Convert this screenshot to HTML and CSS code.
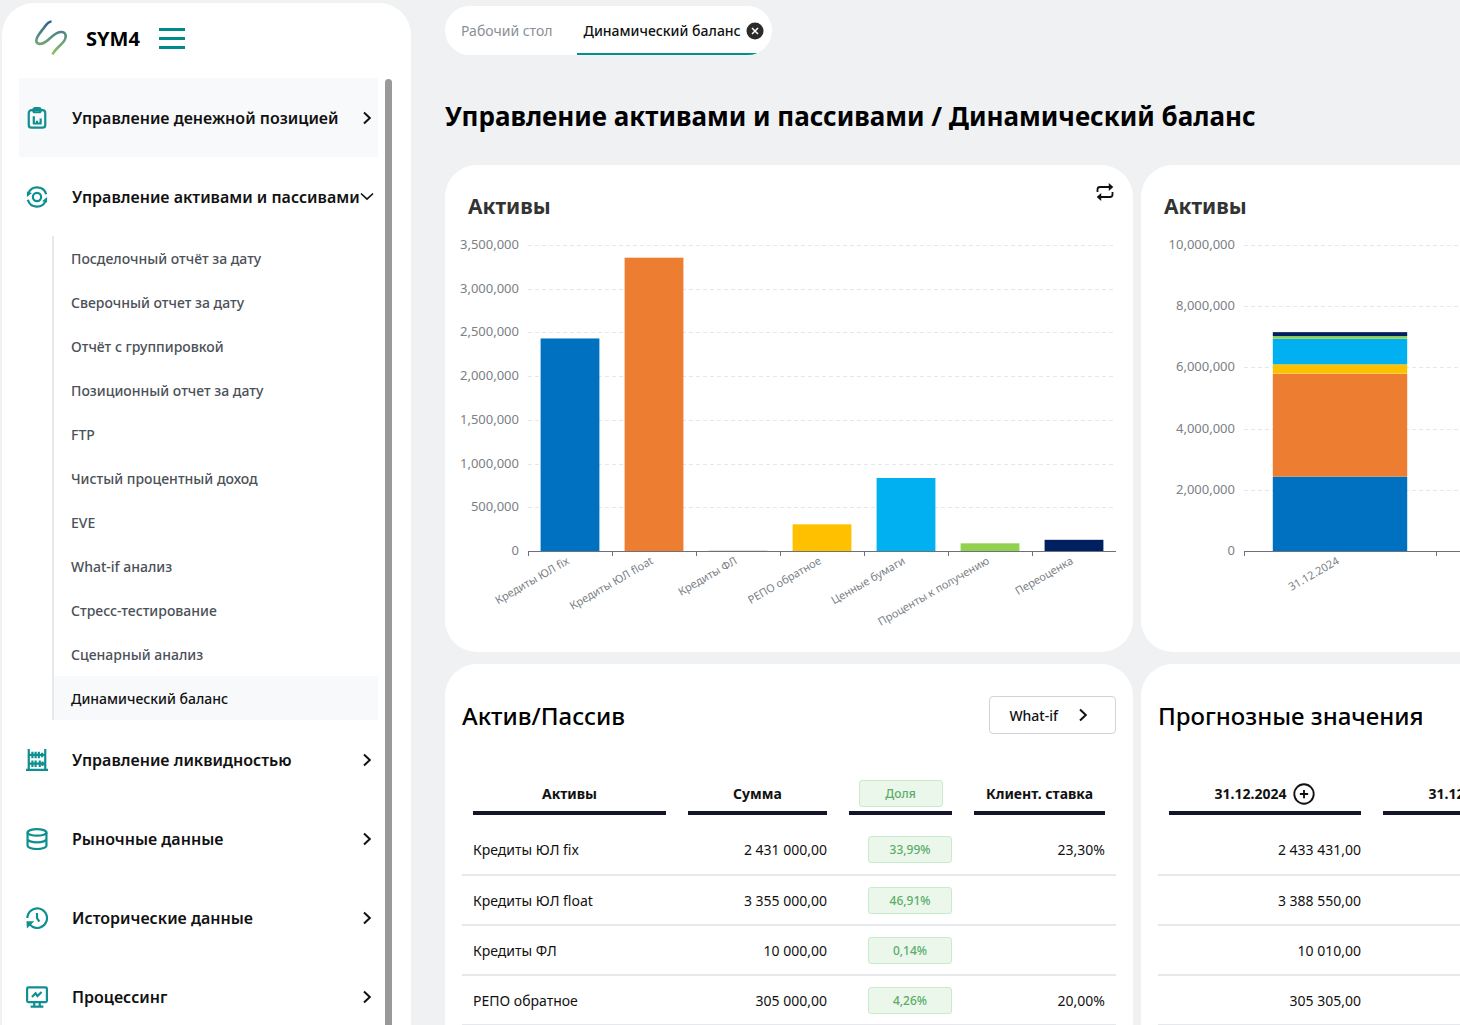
FILE: index.html
```html
<!DOCTYPE html>
<html lang="ru">
<head>
    <meta charset="UTF-8">
    <meta name="viewport" content="width=device-width, initial-scale=1.0">
    <title>SYM4 - Динамический баланс</title>
    <link rel="stylesheet" href="styles.css">
</head>
<body>
    <!-- shared chevrons -->
    <svg class="sprite" aria-hidden="true">
        <symbol id="chevron-right" viewBox="0 0 16 16">
            <path d="M5 2.5 10.8 8 5 13.5" fill="none" stroke="currentColor" stroke-width="2"/>
        </symbol>
        <symbol id="chevron-down" viewBox="0 0 16 16">
            <path d="M2 4.5 8 10.2 14 4.5" fill="none" stroke="currentColor" stroke-width="1.6"/>
        </symbol>
        <symbol id="plus-circle" viewBox="0 0 24 24">
            <circle cx="12" cy="12" r="10.6" fill="none" stroke="currentColor" stroke-width="2"/>
            <path d="M12 7.5v9M7.5 12h9" fill="none" stroke="currentColor" stroke-width="2"/>
        </symbol>
    </svg>

    <div class="app">
        <aside class="sidebar">
            <div class="brand">
                <svg class="logo" viewBox="0 0 34 36" fill="none">
                    <defs>
                        <linearGradient id="logoFill" x1="0" y1="0" x2="0" y2="1">
                            <stop offset="0" stop-color="#2f5f8f"/>
                            <stop offset="0.5" stop-color="#5f9480"/>
                            <stop offset="1" stop-color="#8cc657"/>
                        </linearGradient>
                    </defs>
                    <path d="M17.5 1.5C14 1.5 12 5 9 9C5 14 2.3 17 2.3 20.5C2.3 24 6 25 10.5 22.5C16 19.5 20 12.5 26.5 12C31 11.7 32.5 14.5 31.3 18.5C29.5 24.5 22 27 18.5 34.5" stroke="url(#logoFill)" stroke-width="2.6"/>
                </svg>
                <span class="brand-name">SYM4</span>
                <button class="burger" type="button" aria-label="Меню"><span></span><span></span><span></span></button>
            </div>

            <div class="sidebar-body">
                <nav class="menu">
                    <a class="menu-item hovered" href="#">
                        <svg class="menu-icon" viewBox="0 0 24 24">
                            <rect x="3" y="3.5" width="18" height="19" rx="3"/>
                            <rect x="8" y="1.2" width="8" height="4.5" rx="2"/>
                            <path d="M8.500 10v8M12 15v3M16 12.500v5.500M7.500 18h9.500"/>
                        </svg>
                        <span class="menu-text">Управление денежной позицией</span>
                        <svg class="chevron"><use href="#chevron-right"/></svg>
                    </a>
                    <a class="menu-item" href="#">
                        <svg class="menu-icon" viewBox="0 0 24 24">
                            <circle cx="12" cy="12" r="4.5"/>
                            <path d="M2.5 8A10.3 10.3 0 0 1 22 9M21.5 16A10.3 10.3 0 0 1 2 15"/>
                            <path class="solid" d="M1 6v6l5.500-4.500zM23 18v-6l-5.500 4.500z"/>
                        </svg>
                        <span class="menu-text">Управление активами и пассивами</span>
                        <svg class="chevron"><use href="#chevron-down"/></svg>
                    </a>
                    <div class="submenu">
                        <a href="#">Посделочный отчёт за дату</a>
                        <a href="#">Сверочный отчет за дату</a>
                        <a href="#">Отчёт с группировкой</a>
                        <a href="#">Позиционный отчет за дату</a>
                        <a href="#">FTP</a>
                        <a href="#">Чистый процентный доход</a>
                        <a href="#">EVE</a>
                        <a href="#">What-if анализ</a>
                        <a href="#">Стресс-тестирование</a>
                        <a href="#">Сценарный анализ</a>
                        <a class="active" href="#">Динамический баланс</a>
                    </div>
                    <a class="menu-item" href="#">
                        <svg class="menu-icon" viewBox="0 0 24 24">
                            <path d="M3 0v22M21 0v22M0 22.8h24M3 6.5h18M3 16h18"/>
                            <path d="M7 3v7M10.5 3v7M14 3v7M17.5 4v5M7 12.5v7M10.5 12.5v7M15 12.500v7M18 13.500v5"/>
                        </svg>
                        <span class="menu-text">Управление ликвидностью</span>
                        <svg class="chevron"><use href="#chevron-right"/></svg>
                    </a>
                    <a class="menu-item" href="#">
                        <svg class="menu-icon" viewBox="0 0 24 24">
                            <ellipse cx="12" cy="4.8" rx="10.3" ry="3.5"/>
                            <path d="M1.7 4.8v14.4c0 2 4.6 3.8 10.3 3.8s10.3-1.8 10.3-3.8V4.8M1.7 12c0 2 4.6 3.6 10.3 3.6s10.3-1.6 10.3-3.6"/>
                        </svg>
                        <span class="menu-text">Рыночные данные</span>
                        <svg class="chevron"><use href="#chevron-right"/></svg>
                    </a>
                    <a class="menu-item" href="#">
                        <svg class="menu-icon" viewBox="0 0 24 24">
                            <path d="M1.5 12A10.7 10.7 0 1 1 7 21.5L3 18"/>
                            <path d="M12 6.5V12l2.5 4"/>
                            <path class="solid" d="M0.5 15.500h8.500l-8 8z"/>
                        </svg>
                        <span class="menu-text">Исторические данные</span>
                        <svg class="chevron"><use href="#chevron-right"/></svg>
                    </a>
                    <a class="menu-item" href="#">
                        <svg class="menu-icon" viewBox="0 0 24 24">
                            <rect x="1.200" y="1.5" width="21.600" height="16" rx="1.5"/>
                            <path d="M9 17.5v5M15 17.5v5M5 22.500h14"/>
                            <path d="M6.5 12l4-4 2 3 4.5-4.5"/>
                        </svg>
                        <span class="menu-text">Процессинг</span>
                        <svg class="chevron"><use href="#chevron-right"/></svg>
                    </a>
                </nav>
                <div class="scroll-thumb"></div>
            </div>
        </aside>

        <main class="content">
            <div class="tabs">
                <a class="tab" href="#">Рабочий стол</a>
                <div class="tab active">
                    <a href="#">Динамический баланс</a>
                    <button class="tab-close" type="button" aria-label="Закрыть">
                        <svg viewBox="0 0 18 18"><circle cx="9" cy="9" r="8.5" fill="#2b2b2b"/><path d="M6 6l6 6M12 6l-6 6" stroke="#fff" stroke-width="1.5"/></svg>
                    </button>
                </div>
            </div>

            <h1>Управление активами и пассивами / Динамический баланс</h1>

            <div class="cards">
                <section class="card chart-card">
                    <div class="chart-header">
                        <h2>Активы</h2>
                        <button class="icon-button" type="button" aria-label="Переключить">
                            <svg viewBox="0 0 18 18" fill="none" stroke="#111" stroke-width="1.8">
                                <path d="M1.5 9V6.5A2.5 2.5 0 0 1 4 4H14M16.5 9v2.5A2.5 2.5 0 0 1 14 14H4"/>
                                <path d="M12.8 0 17.3 4l-4.5 4zM5.2 10 .7 14l4.5 4z" fill="#111" stroke="none"/>
                            </svg>
                        </button>
                    </div>
                    <svg class="chart" id="assetsChart" viewBox="0 0 688 400"></svg>
                </section>

                <section class="card chart-card">
                    <div class="chart-header">
                        <h2>Активы</h2>
                    </div>
                    <svg class="chart" id="forecastChart" viewBox="0 0 688 400"></svg>
                </section>

                <section class="card table-card">
                    <div class="table-header">
                        <h2>Актив/Пассив</h2>
                        <button class="whatif" type="button">What-if <svg class="chevron"><use href="#chevron-right"/></svg></button>
                    </div>
                    <table>
                        <colgroup>
                            <col class="col-name"><col class="col-sum"><col class="col-share"><col>
                        </colgroup>
                        <thead>
                            <tr>
                                <th><div class="th-inner">Активы</div></th>
                                <th><div class="th-inner">Сумма</div></th>
                                <th><div class="th-inner"><span class="pill">Доля</span></div></th>
                                <th><div class="th-inner">Клиент. ставка</div></th>
                            </tr>
                        </thead>
                        <tbody>
                            <tr><td>Кредиты ЮЛ fix</td><td class="num">2 431 000,00</td><td class="num"><span class="pill">33,99%</span></td><td class="num">23,30%</td></tr>
                            <tr><td>Кредиты ЮЛ float</td><td class="num">3 355 000,00</td><td class="num"><span class="pill">46,91%</span></td><td class="num"></td></tr>
                            <tr><td>Кредиты ФЛ</td><td class="num">10 000,00</td><td class="num"><span class="pill">0,14%</span></td><td class="num"></td></tr>
                            <tr><td>РЕПО обратное</td><td class="num">305 000,00</td><td class="num"><span class="pill">4,26%</span></td><td class="num">20,00%</td></tr>
                        </tbody>
                    </table>
                </section>

                <section class="card table-card">
                    <div class="table-header">
                        <h2>Прогнозные значения</h2>
                    </div>
                    <table>
                        <colgroup>
                            <col class="col-date"><col class="col-date"><col>
                        </colgroup>
                        <thead>
                            <tr>
                                <th><div class="th-inner">31.12.2024 <button class="add" type="button" aria-label="Добавить"><svg><use href="#plus-circle"/></svg></button></div></th>
                                <th><div class="th-inner">31.12.2025 <button class="add" type="button" aria-label="Добавить"><svg><use href="#plus-circle"/></svg></button></div></th>
                                <th></th>
                            </tr>
                        </thead>
                        <tbody>
                            <tr><td class="num">2 433 431,00</td><td></td><td></td></tr>
                            <tr><td class="num">3 388 550,00</td><td></td><td></td></tr>
                            <tr><td class="num">10 010,00</td><td></td><td></td></tr>
                            <tr><td class="num">305 305,00</td><td></td><td></td></tr>
                        </tbody>
                    </table>
                </section>
            </div>
        </main>
    </div>

    <script>
        const assets = [
            { name: "Кредиты ЮЛ fix", value: 2431000, color: "#0070c0" },
            { name: "Кредиты ЮЛ float", value: 3355000, color: "#ed7d31" },
            { name: "Кредиты ФЛ", value: 10000, color: "#d9dfdb" },
            { name: "РЕПО обратное", value: 305000, color: "#ffc000" },
            { name: "Ценные бумаги", value: 835000, color: "#00b0f0" },
            { name: "Проценты к получению", value: 88000, color: "#92d050" },
            { name: "Переоценка", value: 128000, color: "#002060" }
        ];

        const plotTop = 9;
        const plotBottom = 315;

        // Grid lines, y labels, ticks and slanted x labels
        function drawAxes(opts) {
            let out = '';
            for (let v = 0; v <= opts.max; v += opts.step) {
                const y = Math.round(plotBottom - (plotBottom - plotTop) * v / opts.max) + 0.5;
                if (v > 0) {
                    out += `<line class="grid-line" x1="${opts.left}" x2="${opts.right}" y1="${y}" y2="${y}"/>`;
                }
                out += `<text class="y-label" x="${opts.left - 9}" y="${y + 3}">${v.toLocaleString('en-US')}</text>`;
            }
            const band = (opts.right - opts.left) / opts.labels.length;
            opts.labels.forEach((label, i) => {
                const x = opts.left + band * i;
                const cx = x + band / 2;
                out += `<line class="axis-line" x1="${x + 0.5}" x2="${x + 0.5}" y1="${plotBottom}" y2="${plotBottom + 5}"/>`;
                out += `<text class="x-label" x="${cx}" y="${plotBottom + 12}" transform="rotate(-30 ${cx} ${plotBottom + 12})">${label}</text>`;
            });
            return out;
        }

        function axisLine(opts) {
            return `<line class="axis-line" x1="${opts.left}" x2="${opts.right}" y1="${plotBottom + 0.5}" y2="${plotBottom + 0.5}"/>`;
        }

        function drawBars(id, opts) {
            const band = (opts.right - opts.left) / opts.labels.length;
            let out = drawAxes(opts);
            assets.forEach((item, i) => {
                const h = (plotBottom - plotTop) * item.value / opts.max;
                out += `<rect x="${opts.left + band * (i + 0.15)}" y="${plotBottom - h}" width="${band * 0.7}" height="${h}" fill="${item.color}"/>`;
            });
            document.getElementById(id).innerHTML = out + axisLine(opts);
        }

        function drawStack(id, opts) {
            const band = (opts.right - opts.left) / opts.labels.length;
            let out = drawAxes(opts);
            let y = plotBottom;
            assets.forEach(item => {
                const h = (plotBottom - plotTop) * item.value / opts.max;
                y -= h;
                out += `<rect x="${opts.left + band * 0.15}" y="${y}" width="${band * 0.7}" height="${h}" fill="${item.color}"/>`;
            });
            document.getElementById(id).innerHTML = out + axisLine(opts);
        }

        drawBars("assetsChart", { left: 83, right: 671, max: 3500000, step: 500000, labels: assets.map(a => a.name) });
        drawStack("forecastChart", { left: 103, right: 679, max: 10000000, step: 2000000, labels: ["31.12.2024", "", ""] });
    </script>
</body>
</html>
```

FILE: styles.css
```css
* {
    box-sizing: border-box;
}

body {
    margin: 0;
    background-color: #eff1f3;
    color: #111;
    font-family: "Noto Sans", "Open Sans", sans-serif;
    font-size: 14px;
}

a {
    color: inherit;
    text-decoration: none;
}

button {
    font: inherit;
    color: inherit;
    background: none;
    border: none;
    padding: 0;
    cursor: pointer;
}

h1,
h2 {
    margin: 0;
}

.sprite {
    display: none;
}

.app {
    display: flex;
    gap: 34px;
    height: 100vh;
    overflow: hidden;
}

/* Sidebar */
.sidebar {
    flex: 0 0 409px;
    min-width: 0;
    display: flex;
    flex-direction: column;
    margin: 3px 0 0 2px;
    background-color: #fff;
    border-radius: 32px 32px 0 0;
}

.brand {
    flex: none;
    display: flex;
    align-items: center;
    height: 70px;
    padding-left: 32px;
    margin-bottom: 5px;
}

.logo {
    width: 34px;
    height: 36px;
}

.brand-name {
    margin-left: 18px;
    font-size: 20px;
    font-weight: 700;
    color: #000;
}

.burger {
    display: flex;
    flex-direction: column;
    gap: 6px;
    width: 26px;
    margin-left: 19px;
}

.burger span {
    height: 3px;
    background-color: #008b8b;
}

.sidebar-body {
    flex: 1;
    display: flex;
    min-height: 0;
    padding: 0 19px 0 17px;
    overflow: hidden;
}

.menu {
    flex: 1;
    min-width: 0;
    margin-right: 7px;
}

.scroll-thumb {
    flex: none;
    width: 7px;
    margin-top: 1px;
    background-color: #999;
    border-radius: 4px 4px 0 0;
}

.menu-item {
    display: flex;
    align-items: center;
    height: 79px;
    padding: 0 3px 0 7px;
    font-size: 16px;
    font-weight: 600;
    white-space: nowrap;
}

.menu-item.hovered {
    background-color: #f8f9fb;
}

.menu-icon {
    flex: none;
    width: 22px;
    height: 22px;
    fill: none;
    stroke: #0f8f8f;
    stroke-width: 2.4;
}

.menu-icon .solid {
    fill: #0f8f8f;
    stroke: none;
}

.menu-text {
    flex: 1;
    min-width: 0;
    margin-left: 24px;
}

.chevron {
    flex: none;
    width: 16px;
    height: 16px;
}

.submenu {
    margin-left: 33px;
    border-left: 2px solid #e6e8ec;
}

.submenu a {
    display: flex;
    align-items: center;
    height: 44px;
    padding-left: 17px;
    font-weight: 500;
    color: #4b5158;
}

.submenu a.active {
    background-color: #f8f9fb;
    color: #111;
}

/* Content */
.content {
    flex: 1;
    min-width: 0;
    padding-top: 6px;
}

.tabs {
    display: inline-flex;
    height: 49px;
    padding-right: 8px;
    background-color: #fff;
    border-radius: 25px;
    overflow: hidden;
}

.tab {
    display: flex;
    align-items: center;
    padding: 0 24px 0 16px;
    color: #8a8f96;
}

.tab.active {
    gap: 5px;
    padding: 0 0 0 7px;
    color: #111;
    font-weight: 500;
    box-shadow: inset 0 -2px 0 #009090;
}

.tab-close,
.tab-close svg {
    display: block;
    width: 18px;
    height: 18px;
}

h1 {
    margin: 45px 0 33px;
    font-size: 26px;
    line-height: 32px;
    font-weight: 700;
    color: #000;
    white-space: nowrap;
}

.cards {
    display: grid;
    grid-template-columns: repeat(2, minmax(688px, 1fr));
    gap: 12px 8px;
}

.card {
    background-color: #fff;
    border-radius: 32px;
}

.chart-card {
    padding-bottom: 16px;
}

.chart-header {
    display: flex;
    justify-content: space-between;
    align-items: flex-start;
    height: 71px;
    padding: 18px 19px 0 23px;
}

.chart-header h2 {
    margin-top: 9px;
    font-size: 21px;
    line-height: 28px;
    color: #333;
}

.icon-button,
.icon-button svg {
    display: block;
    width: 18px;
    height: 18px;
}

.chart {
    display: block;
    width: 100%;
}

.chart text {
    fill: #7b7f86;
    text-anchor: end;
}

.y-label {
    font-size: 13px;
}

.x-label {
    font-size: 11px;
}

.grid-line {
    stroke: #e3e7f0;
    stroke-dasharray: 4 3;
}

.axis-line {
    stroke: #6e7079;
}

/* Tables */
.table-card {
    padding: 32px 17px 40px;
}

.table-header {
    display: flex;
    justify-content: space-between;
    align-items: center;
    height: 38px;
    margin-bottom: 46px;
}

.table-header h2 {
    font-size: 24px;
    font-weight: 500;
    color: #000;
}

.whatif {
    display: flex;
    align-items: center;
    gap: 17px;
    height: 38px;
    padding: 0 24px 0 19px;
    border: 1px solid #cfd4da;
    border-radius: 4px;
    font-weight: 500;
}

table {
    width: 100%;
    table-layout: fixed;
    border-collapse: collapse;
}

.col-name {
    width: 215px;
}

.col-date {
    width: 214px;
}

.col-sum {
    width: 161px;
}

.col-share {
    width: 125px;
}

th {
    padding: 0 11px 10px;
    font-weight: 700;
}

.th-inner {
    display: flex;
    justify-content: center;
    align-items: center;
    gap: 7px;
    height: 35px;
    padding-bottom: 4px;
    border-bottom: 4px solid #14142b;
    white-space: nowrap;
}

td {
    height: 50px;
    padding: 0 11px;
    border-bottom: 2px solid #e6e8ec;
    white-space: nowrap;
}

.num {
    text-align: right;
}

.pill {
    display: inline-block;
    width: 84px;
    height: 27px;
    border: 1px solid #c9ebcc;
    border-radius: 3px;
    background-color: #eaf7ea;
    color: #5aad68;
    font-size: 12px;
    line-height: 25px;
    font-weight: 500;
    text-align: center;
}

.add,
.add svg {
    display: block;
    width: 22px;
    height: 22px;
}
```
